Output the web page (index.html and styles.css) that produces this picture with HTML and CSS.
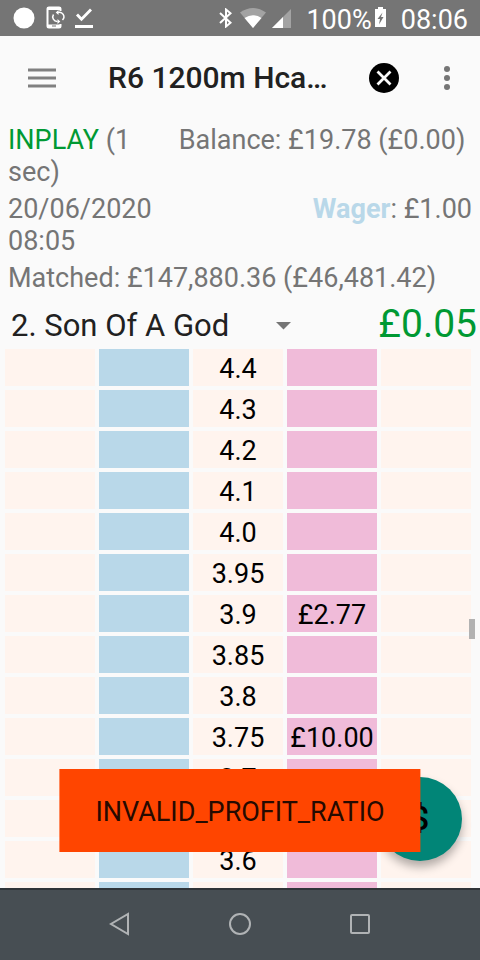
FILE: index.html
```html
<!doctype html>
<html lang="en">
<head>
	<meta charset="UTF-8">
	<meta name="viewport" content="width=device-width, initial-scale=1">
	<title>R6 1200m Hcap</title>
	<link rel="stylesheet" href="styles.css">
</head>
<body>
	<div class="statusbar">
		<svg width="22" height="22" viewBox="0 0 22 22"><circle cx="11" cy="11" r="10.5" fill="#fff"/></svg>
		<svg class="sync" width="20" height="24" viewBox="0 0 20 24" fill="none" stroke="#fff">
			<path d="M14.500 5V3Q14.500 1.500 13 1.500H3Q1.500 1.500 1.500 3V20Q1.500 21.500 3 21.500H13Q14.500 21.500 14.500 20V18" stroke-width="2"/>
			<path d="M1 2.500h14M1 20h14" stroke-width="3"/>
			<path d="M6 20h4" stroke="#757575" stroke-width="1"/>
			<path d="M12 6.500A4.500 4.500 0 0 1 16.500 14M11.500 15.500A4.500 4.500 0 0 1 7.500 8.500" stroke-width="1.500"/>
			<path d="M12.500 4v5l-2.800-2.500zM11.500 13v5l2.800-2.500z" fill="#fff" stroke="none"/>
		</svg>
		<svg class="done" width="18" height="20" viewBox="0 0 18 20" fill="none" stroke="#fff" stroke-width="2.800">
			<path d="M2 6.500l4.500 4.800L16 1.500M0 18.500h18"/>
		</svg>
		<span class="spacer"></span>
		<svg width="14" height="20" viewBox="0 0 14 20" fill="none" stroke="#fff" stroke-width="2">
			<path d="M1 5l10.500 9.800L7 18.500v-17l4.500 3.700L1 15"/>
		</svg>
		<svg class="wifi" width="26" height="20" viewBox="0 0 26 20">
			<path d="M0 4.500Q13-4.500 26 4.500L13 20z" fill="#a3a3a3"/>
			<path d="M4.500 10Q13 4.500 21.500 10L13 20z" fill="#fff"/>
		</svg>
		<svg class="signal" width="20" height="19" viewBox="0 0 20 19">
			<path d="M0 19L19 0V19z" fill="#a3a3a3"/>
			<path d="M0 19L11 8V19z" fill="#fff"/>
		</svg>
		<span class="level">100%</span>
		<svg class="battery" width="12" height="20" viewBox="0 0 12 20">
			<path d="M3 0h5v2h3v18H0V2h3z" fill="#fff"/>
			<path d="M7.500 5.500L2.500 12h2.500l-1 5.500L8.500 10H6z" fill="#757575"/>
		</svg>
		<span class="clock">08:06</span>
	</div>

	<header class="toolbar">
		<button type="button" aria-label="Menu">
			<svg width="28" height="22" viewBox="0 0 28 22"><path d="M0 3h28M0 11h28M0 19h28" stroke="#808080" stroke-width="3"/></svg>
		</button>
		<h1>R6 1200m Hca…</h1>
		<button class="close" type="button" aria-label="Close">
			<svg width="30" height="30" viewBox="0 0 30 30"><circle cx="15" cy="15" r="15"/><path d="M8.500 8.500l13 13M21.500 8.500l-13 13" stroke="#fafafa" stroke-width="2.800"/></svg>
		</button>
		<button type="button" aria-label="More options">
			<svg width="6" height="24" viewBox="0 0 6 24" fill="#757575"><circle cx="3" cy="3" r="3"/><circle cx="3" cy="12" r="3"/><circle cx="3" cy="21" r="3"/></svg>
		</button>
	</header>

	<main>
		<section class="market">
			<div class="row">
				<span class="state"><span class="green">INPLAY</span> (1 sec)</span>
				<span>Balance: £19.78 (£0.00)&nbsp;</span>
			</div>
			<div class="row">
				<span class="state">20/06/2020 08:05</span>
				<span><b>Wager</b>: £1.00</span>
			</div>
			<div class="row">
				<span>Matched: £147,880.36 (£46,481.42)</span>
			</div>
		</section>

		<div class="runner">
			<div class="picker">
				<select aria-label="Runner">
					<option>2. Son Of A God</option>
				</select>
				<svg width="15" height="8" viewBox="0 0 15 8"><path d="M0 0h15L7.500 7.500z" fill="#757575"/></svg>
			</div>
			<span class="profit">£0.05</span>
		</div>

		<div class="ladder">
			<table>
				<tr><td></td><td class="back"></td><td>4.4</td><td class="lay"></td><td></td></tr>
				<tr><td></td><td class="back"></td><td>4.3</td><td class="lay"></td><td></td></tr>
				<tr><td></td><td class="back"></td><td>4.2</td><td class="lay"></td><td></td></tr>
				<tr><td></td><td class="back"></td><td>4.1</td><td class="lay"></td><td></td></tr>
				<tr><td></td><td class="back"></td><td>4.0</td><td class="lay"></td><td></td></tr>
				<tr><td></td><td class="back"></td><td>3.95</td><td class="lay"></td><td></td></tr>
				<tr><td></td><td class="back"></td><td>3.9</td><td class="lay">£2.77</td><td></td></tr>
				<tr><td></td><td class="back"></td><td>3.85</td><td class="lay"></td><td></td></tr>
				<tr><td></td><td class="back"></td><td>3.8</td><td class="lay"></td><td></td></tr>
				<tr><td></td><td class="back"></td><td>3.75</td><td class="lay">£10.00</td><td></td></tr>
				<tr><td></td><td class="back"></td><td>3.7</td><td class="lay"></td><td></td></tr>
				<tr><td></td><td class="back"></td><td>3.65</td><td class="lay"></td><td></td></tr>
				<tr><td></td><td class="back"></td><td>3.6</td><td class="lay"></td><td></td></tr>
				<tr><td></td><td class="back"></td><td></td><td class="lay"></td><td></td></tr>
			</table>
			<div class="scrollbar"></div>
		</div>

		<button class="fab" type="button">$</button>
		<div class="toast" role="alert">INVALID_PROFIT_RATIO</div>
	</main>

	<nav class="navbar">
		<button type="button" aria-label="Back">
			<svg width="24" height="24" viewBox="0 0 24 24"><path d="M20 2v20L3 12z"/></svg>
		</button>
		<button type="button" aria-label="Home">
			<svg width="24" height="24" viewBox="0 0 24 24"><circle cx="12" cy="12" r="10"/></svg>
		</button>
		<button type="button" aria-label="Recent apps">
			<svg width="24" height="24" viewBox="0 0 24 24"><rect x="3" y="3" width="18" height="18" rx="1"/></svg>
		</button>
	</nav>
</body>
</html>
```

FILE: styles.css
```css
* {
	box-sizing: border-box;
}
html, body {
	height: 100%;
	margin: 0;
}
body {
	display: flex;
	flex-direction: column;
	background: #fafafa;
	color: #757575;
	font: 27px/32px Roboto, sans-serif;
}
button {
	display: flex;
	align-items: center;
	justify-content: center;
	padding: 0;
	border: 0;
	background: none;
	font: inherit;
}
svg {
	display: block;
	flex: none;
}

/* android status bar */
.statusbar {
	display: flex;
	align-items: center;
	flex: none;
	height: 36px;
	padding: 0 12px 0 13px;
	background: #757575;
	color: #fff;
}
.statusbar .sync {
	margin-left: 11px;
}
.statusbar .done {
	margin-left: 9px;
}
.spacer {
	flex: 1;
}
.wifi {
	margin-left: 7px;
}
.signal {
	margin-left: 6px;
}
.level,
.clock {
	padding-top: 4px;
}
.level {
	margin-left: 14px;
}
.battery {
	margin: 0 14px 3px 3px;
}

.toolbar {
	display: flex;
	align-items: center;
	flex: none;
	height: 84px;
	padding: 0 30px 0 28px;
}
.toolbar h1 {
	flex: 1;
	margin: 0 0 0 52px;
	color: #212121;
	font-size: 30px;
	font-weight: 500;
	line-height: 36px;
	white-space: nowrap;
}
.toolbar .close {
	margin-right: 45px;
}

main {
	display: flex;
	flex-direction: column;
	flex: 1;
	min-height: 0;
	position: relative;
}
.market {
	display: flex;
	flex-direction: column;
	gap: 5px;
	padding: 4px 8px 0;
}
.row {
	display: flex;
	justify-content: space-between;
}
.state {
	width: 33%;
}
.green,
.profit {
	color: #009933;
}
.row b {
	color: #b9d8e9;
}

.runner {
	display: flex;
	justify-content: space-between;
	height: 51px;
	padding: 0 3px 0 11px;
}
.picker {
	display: flex;
	align-items: center;
	width: 60%;
	padding-top: 12px;
}
.picker select {
	appearance: none;
	flex: 1;
	height: 39px;
	padding: 0;
	border: 0;
	background: none;
	color: #212121;
	font: 31px/39px Roboto, sans-serif;
}
.profit {
	font-size: 39px;
	line-height: 60px;
}

/* price ladder */
.ladder {
	flex: 1;
	min-height: 0;
	overflow: hidden;
	position: relative;
	padding: 0 5px 0 1px;
}
.ladder table {
	width: 100%;
	table-layout: fixed;
	border-spacing: 4px;
	color: #000;
}
.ladder td {
	height: 37px;
	padding: 2px 0 0;
	background: #fff4ee;
	text-align: center;
}
.ladder .back {
	background: #b9d8e9;
}
.ladder .lay {
	background: #f0bbd9;
}
.scrollbar {
	position: absolute;
	top: 274px;
	right: 5px;
	width: 6px;
	height: 20px;
	background: #b2b2b2;
}

.fab {
	position: absolute;
	right: 18px;
	bottom: 27px;
	width: 84px;
	height: 84px;
	border-radius: 50%;
	background: #018577;
	box-shadow: 0 6px 10px rgba(0, 0, 0, .3);
	color: #000;
	font-size: 33px;
	font-weight: 500;
}
.toast {
	position: absolute;
	bottom: 36px;
	left: 50%;
	transform: translateX(-50%);
	padding: 27px 36px 24px;
	background: #ff4500;
	color: #260a00;
}

.navbar {
	display: flex;
	justify-content: center;
	flex: none;
	gap: 96px;
	height: 72px;
	padding: 0 1px 2px 0;
	border-top: 2px solid #2f3438;
	background: #474e53;
}
.navbar svg {
	fill: none;
	stroke: #b0b3b5;
	stroke-width: 2;
}
```
